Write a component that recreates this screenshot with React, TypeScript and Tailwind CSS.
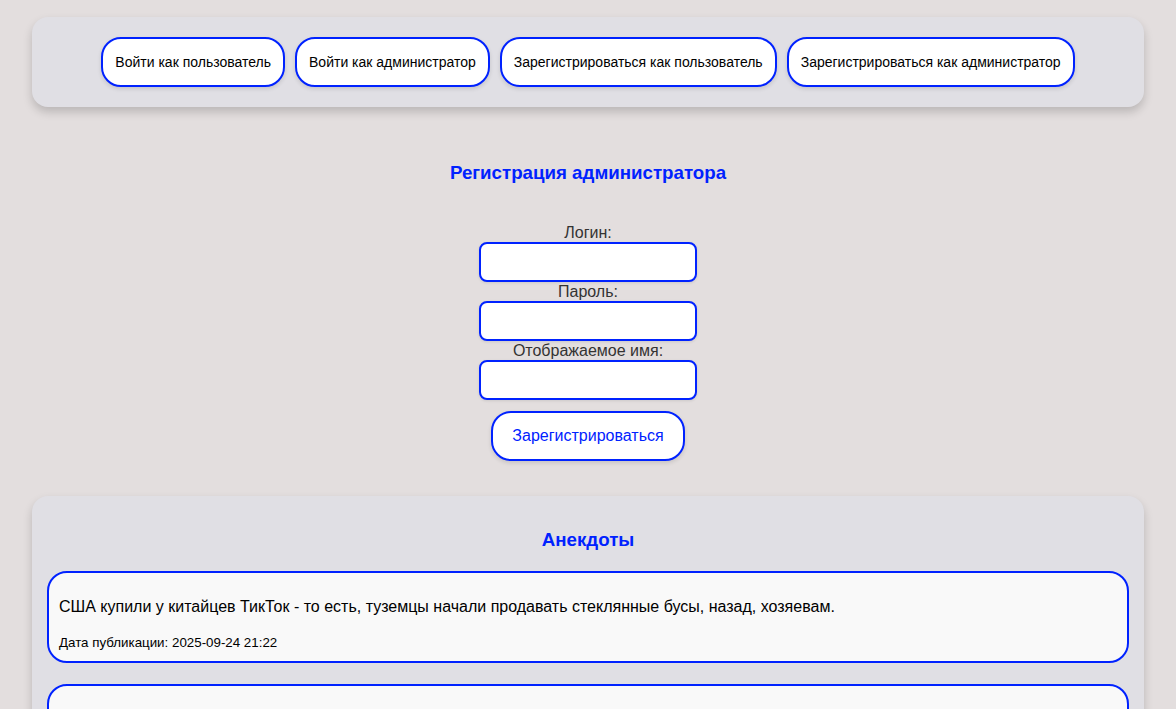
const navButtons = [
    "Войти как пользователь",
    "Войти как администратор",
    "Зарегистрироваться как пользователь",
    "Зарегистрироваться как администратор",
];

const fields = ["Логин:", "Пароль:", "Отображаемое имя:"];

const jokes = [
    {
        text: "США купили у китайцев ТикТок - то есть, туземцы начали продавать стеклянные бусы, назад, хозяевам.",
        date: "2025-09-24 21:22",
    },
    {
        text: "",
        date: "",
    },
];

const App = () => {
    return (
        <div className="min-h-[709px] bg-[#e3dede] pt-[17px] font-['Liberation_Sans',Arial,sans-serif]">
            {/* top nav */}
            <div className="mx-8 flex justify-center gap-[10px] rounded-2xl bg-[#e0dfe4] py-5 shadow-[0_5px_10px_rgba(0,0,0,0.18)]">
                {navButtons.map((label) => (
                    <button
                        key={label}
                        className="h-[50px] rounded-[20px] border-2 border-[#0022ff] bg-white px-3 text-[14px] text-black shadow-[0_2px_4px_rgba(0,0,0,0.12)]"
                    >
                        {label}
                    </button>
                ))}
            </div>

            {/* registration form */}
            <div className="flex flex-col items-center">
                <h3 className="mt-[55px] text-[18.72px] font-bold leading-[22px] text-[#0022ff]">
                    Регистрация администратора
                </h3>
                <div className="mt-[39px] flex flex-col items-center">
                    {fields.map((label) => (
                        <div key={label} className="flex flex-col items-center">
                            <label className="text-[16px] leading-[19px] text-[#333]">{label}</label>
                            <input className="h-[40px] w-[218px] rounded-lg border-2 border-[#0022ff] bg-white px-2 outline-none shadow-[0_1px_3px_rgba(0,0,0,0.1)]" />
                        </div>
                    ))}
                    <button className="mt-[11px] h-[50px] w-[194px] rounded-[20px] border-2 border-[#0022ff] bg-white text-[16px] text-[#0022ff] shadow-[0_2px_4px_rgba(0,0,0,0.12)]">
                        Зарегистрироваться
                    </button>
                </div>
            </div>

            {/* jokes */}
            <div className="mx-8 mt-[35px] rounded-t-2xl bg-[#e0dfe4] px-[15px] pt-[33px] pb-5 shadow-[0_5px_10px_rgba(0,0,0,0.18)]">
                <h3 className="text-center text-[18.72px] font-bold leading-[22px] text-[#0022ff]">Анекдоты</h3>
                <div className="mt-[20px] flex flex-col gap-[21px]">
                    {jokes.map((joke, i) => (
                        <div
                            key={i}
                            className="min-h-[92px] rounded-[20px] border-2 border-[#0022ff] bg-[#f9f9f9] px-[10px] pt-[24px] pb-[11px]"
                        >
                            <p className="text-[16px] leading-[19px] text-black">{joke.text}</p>
                            {joke.date && (
                                <p className="mt-[19px] text-[13.33px] leading-[15px] text-black">
                                    Дата публикации: {joke.date}
                                </p>
                            )}
                        </div>
                    ))}
                </div>
            </div>
        </div>
    );
};

export default App;
